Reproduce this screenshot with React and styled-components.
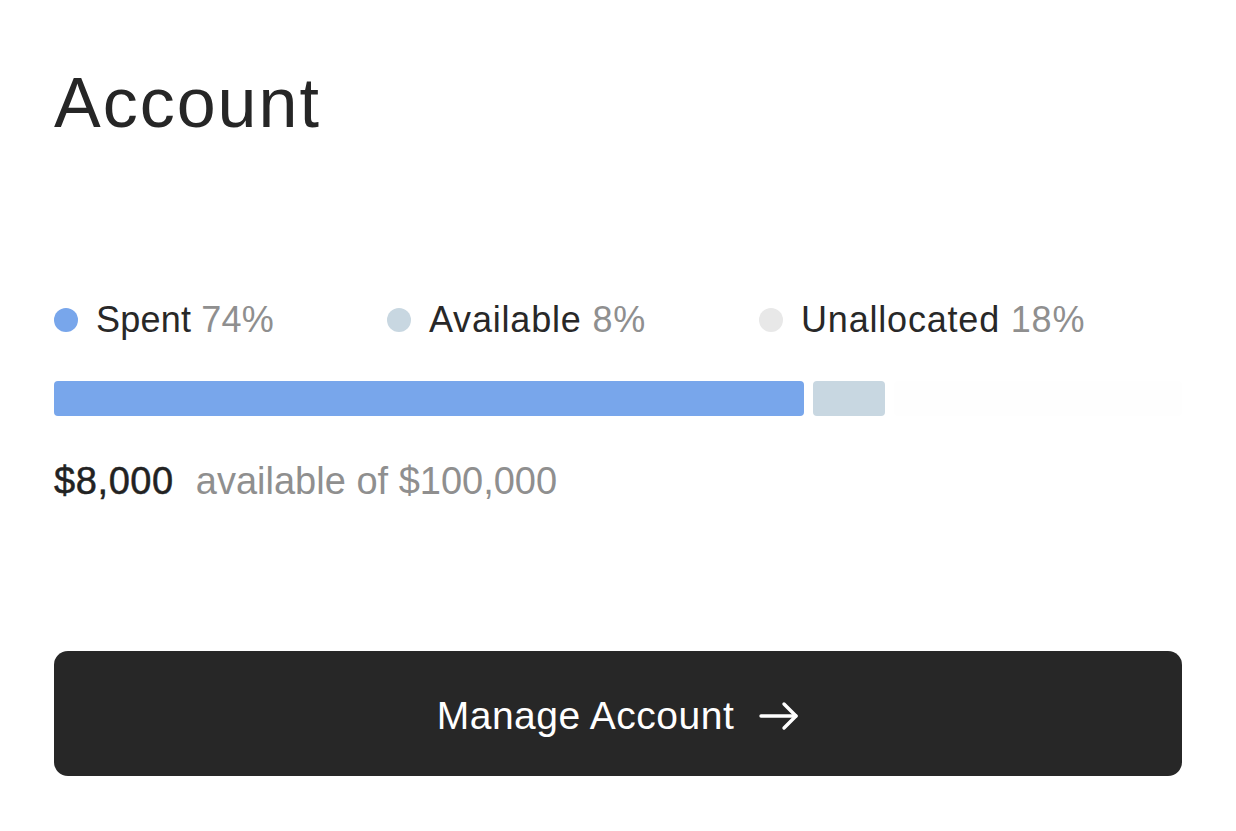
import React from "react";
import styled, { createGlobalStyle } from "styled-components";

const GlobalStyle = createGlobalStyle`
  html, body {
    margin: 0;
    padding: 0;
    background: #ffffff;
  }
  body {
    font-family: "Liberation Sans", Arial, sans-serif;
    -webkit-font-smoothing: antialiased;
  }
`

const PageStyled = styled.div`
  width: 1236px;
  height: 831px;
  box-sizing: border-box;
  padding: 68px 54px 0;
  display: flex;
  flex-direction: column;
`
const TitleStyled = styled.h1`
  margin: 0;
  font-size: 70px;
  line-height: 70px;
  font-weight: 400;
  letter-spacing: 2px;
  color: #262626;
`
const LegendStyled = styled.div`
  display: flex;
  flex-direction: row;
  align-items: center;
  gap: 113px;
  margin-top: 164px;
`
const LegendItemStyled = styled.div`
  display: flex;
  align-items: center;
  gap: 18px;
  font-size: 36px;
  line-height: 36px;
  letter-spacing: ${(p) => p.spacing}px;
  color: #282828;
`
const DotStyled = styled.span`
  width: 24px;
  height: 24px;
  border-radius: 50%;
  background: ${(p) => p.color};
  flex-shrink: 0;
`
const PercentStyled = styled.span`
  color: #8f8f8f;
`
const BarStyled = styled.div`
  display: flex;
  gap: 9px;
  height: 35px;
  margin-top: 43px;
`
const SegmentStyled = styled.div`
  flex: ${(p) => p.grow} 0 0;
  border-radius: 4px;
  background: ${(p) => p.color};
`
const AmountStyled = styled.div`
  margin-top: 46px;
  font-size: 38px;
  line-height: 38px;
  color: #8f8f8f;
  display: flex;
  gap: 22px;
`
const AmountValueStyled = styled.span`
  color: #222222;
  letter-spacing: 0.6px;
  -webkit-text-stroke: 0.5px #222222;
`
const ButtonStyled = styled.button`
  margin-top: 151px;
  height: 125px;
  width: 100%;
  border: none;
  border-radius: 14px;
  background: #272727;
  color: #ffffff;
  font-family: "Liberation Sans", Arial, sans-serif;
  font-size: 39px;
  letter-spacing: 0.5px;
  padding: 4px 0 0;
  display: flex;
  align-items: center;
  justify-content: center;
  gap: 25px;
  cursor: pointer;
`

const legend = [
  { label: "Spent", pct: "74%", color: "#78a6eb", spacing: 0.2 },
  { label: "Available", pct: "8%", color: "#c8d7e1", spacing: 0.8 },
  { label: "Unallocated", pct: "18%", color: "#e8e8e8", spacing: 0.8 },
];

const segments = [
  { grow: 750, color: "#78a6eb" },
  { grow: 72, color: "#c8d7e1" },
  { grow: 288, color: "#fefefe" },
];

const Arrow = () => (
  <svg width="40" height="30" viewBox="0 0 40 30" fill="none">
    <path d="M2 15h35" stroke="#fff" strokeWidth="3.4" strokeLinecap="round" />
    <path d="M25 3l12 12-12 12" stroke="#fff" strokeWidth="3.4" strokeLinecap="round" strokeLinejoin="round" />
  </svg>
);

export default function App() {
  return (
    <>
      <GlobalStyle />
      <PageStyled>
        <TitleStyled>Account</TitleStyled>
        <LegendStyled>
          {legend.map((l) => (
            <LegendItemStyled key={l.label} spacing={l.spacing}>
              <DotStyled color={l.color} />
              <span>
                {l.label} <PercentStyled>{l.pct}</PercentStyled>
              </span>
            </LegendItemStyled>
          ))}
        </LegendStyled>
        <BarStyled>
          {segments.map((s, i) => (
            <SegmentStyled key={i} grow={s.grow} color={s.color} />
          ))}
        </BarStyled>
        <AmountStyled>
          <AmountValueStyled>$8,000</AmountValueStyled>
          <span>available of $100,000</span>
        </AmountStyled>
        <ButtonStyled>
          Manage Account
          <Arrow />
        </ButtonStyled>
      </PageStyled>
    </>
  );
}
